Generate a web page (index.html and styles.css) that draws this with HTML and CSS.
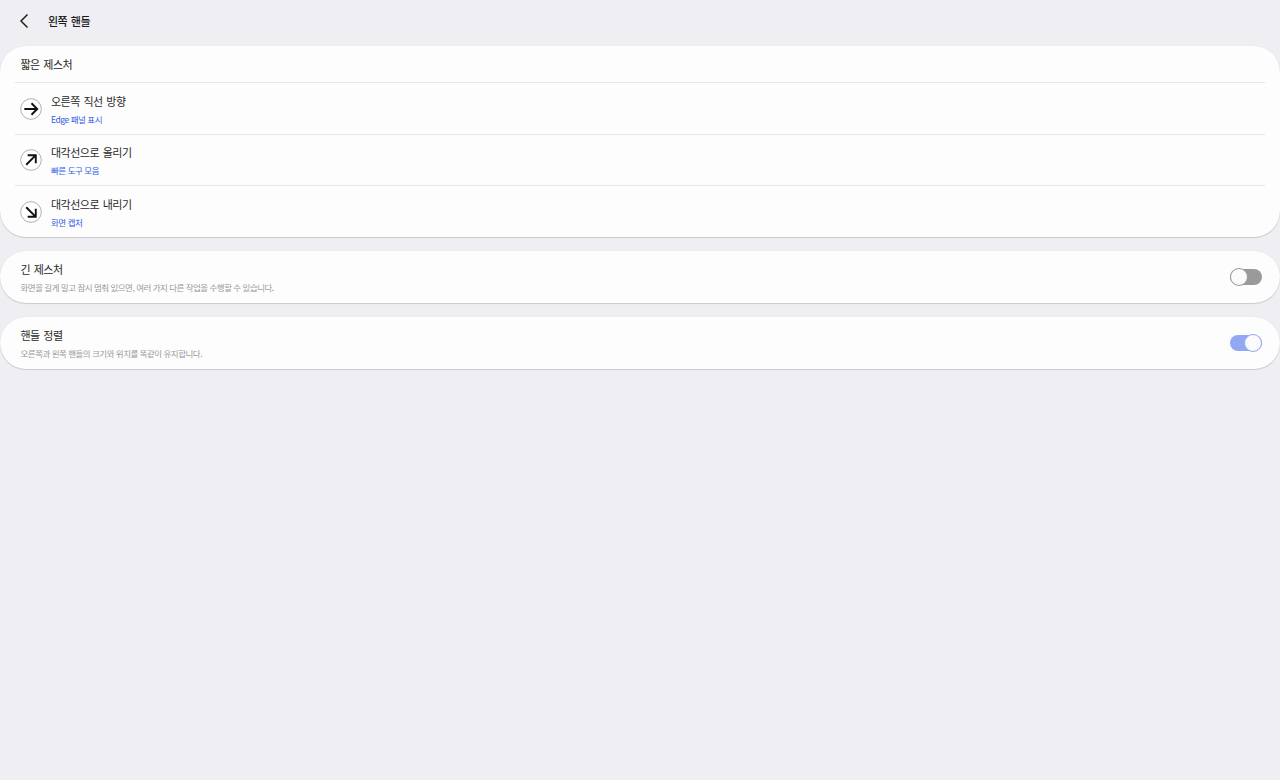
FILE: index.html
```html
<!DOCTYPE html>
<html lang="ko">
<head>
    <meta charset="UTF-8">
    <title>왼쪽 핸들</title>
    <link rel="stylesheet" href="styles.css">
</head>
<body>
    <div class="header">
        <svg class="back" width="12" height="16" viewBox="0 0 12 16"><path d="M9.5 1.5 L3 8 L9.5 14.5" fill="none" stroke="#222" stroke-width="1.5"/></svg>
        <h1>왼쪽 핸들</h1>
    </div>

    <div class="card">
        <div class="section-title">짧은 제스처</div>
        <div class="row">
            <svg class="gesture" width="22" height="22" viewBox="0 0 23 23"><circle cx="11.5" cy="11.5" r="10.8" fill="#fff" stroke="#999" stroke-width="0.8"/><path d="M4.5 11.5 H18 M12 5.5 L18 11.5 L12 17.5" fill="none" stroke="#111" stroke-width="2"/></svg>
            <div class="row-text">
                <div class="label">오른쪽 직선 방향</div>
                <div class="link">Edge 패널 표시</div>
            </div>
        </div>
        <div class="row">
            <svg class="gesture" width="22" height="22" viewBox="0 0 23 23"><circle cx="11.5" cy="11.5" r="10.8" fill="#fff" stroke="#999" stroke-width="0.8"/><path d="M6.5 16.5 L16 7 M8 6.5 H16.5 V15" fill="none" stroke="#111" stroke-width="2"/></svg>
            <div class="row-text">
                <div class="label">대각선으로 올리기</div>
                <div class="link">빠른 도구 모음</div>
            </div>
        </div>
        <div class="row">
            <svg class="gesture" width="22" height="22" viewBox="0 0 23 23"><circle cx="11.5" cy="11.5" r="10.8" fill="#fff" stroke="#999" stroke-width="0.8"/><path d="M6.5 6.5 L16 16 M8 16.5 H16.5 V8" fill="none" stroke="#111" stroke-width="2"/></svg>
            <div class="row-text">
                <div class="label">대각선으로 내리기</div>
                <div class="link">화면 캡처</div>
            </div>
        </div>
    </div>

    <div class="card setting">
        <div class="setting-text">
            <div class="label">긴 제스처</div>
            <div class="desc">화면을 길게 밀고 잠시 멈춰 있으면, 여러 가지 다른 작업을 수행할 수 있습니다.</div>
        </div>
        <div class="switch"><div class="knob"></div></div>
    </div>

    <div class="card setting">
        <div class="setting-text">
            <div class="label">핸들 정렬</div>
            <div class="desc">오른쪽과 왼쪽 핸들의 크기와 위치를 똑같이 유지합니다.</div>
        </div>
        <div class="switch on"><div class="knob"></div></div>
    </div>
</body>
</html>
```

FILE: styles.css
```css
body { margin: 0; background-color: #eeeef3; color: #252525; font-family: "Noto Sans CJK KR", "Noto Sans", sans-serif; height: 780px; overflow: hidden; }
.header { display: flex; align-items: center; height: 46px; padding: 0 0 4px 18px; box-sizing: border-box; }
.back { margin-right: 18px; }
h1 { margin: 0 0 1px; font-size: 11px; font-weight: 500; letter-spacing: -0.5px; word-spacing: 1px; color: #1c1c1c; }
.card { background: #fdfdfd; border-radius: 26px; box-shadow: 0 1px 1px rgba(0,0,0,0.14), 0 0 1px rgba(0,0,0,0.1); margin-bottom: 14px; }
.section-title { height: 36px; line-height: 37px; padding-left: 20.5px; font-size: 11px; letter-spacing: -0.5px; word-spacing: 1px; }
.row { display: flex; align-items: center; height: 51.5px; margin: 0 15px; padding-left: 5px; border-top: 1px solid #e6e6e9; box-sizing: border-box; }
.gesture { margin: 1px 9px 0 0; flex: none; }
.row-text { display: flex; flex-direction: column; padding-top: 1px; }
.label { font-size: 11px; line-height: 16px; letter-spacing: -0.5px; word-spacing: 1px; color: #2a2a2a; }
.link { font-size: 8.5px; line-height: 12px; margin-top: 4px; letter-spacing: -0.45px; color: #2f5be8; }
.setting { display: flex; align-items: center; justify-content: space-between; height: 52px; padding: 0 18px 0 20.5px; }
.setting-text { display: flex; flex-direction: column; }
.desc { font-size: 8.5px; line-height: 12px; margin-top: 4px; letter-spacing: -0.5px; color: #999; }
.switch { position: relative; width: 32px; height: 16px; border-radius: 8px; background: #9a9a9a; }
.knob { position: absolute; left: 0; top: -1px; width: 16px; height: 16px; border-radius: 50%; background: #fbfbfb; border: 1px solid #9a9a9a; }
.switch.on { background: #93a8f3; }
.switch.on .knob { left: auto; right: 0; border-color: #93a8f3; }
```
